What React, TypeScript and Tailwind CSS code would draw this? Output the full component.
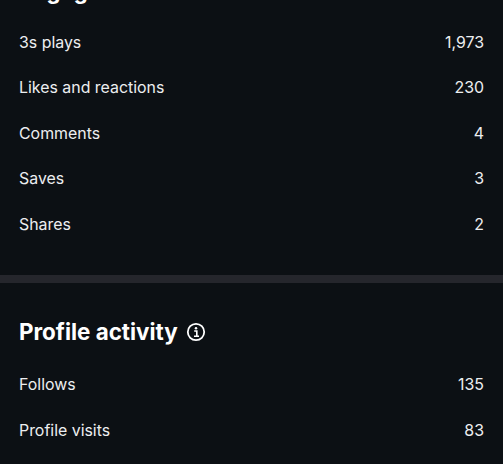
const engagement = [
  { label: '3s plays', value: '1,973' },
  { label: 'Likes and reactions', value: '230' },
  { label: 'Comments', value: '4' },
  { label: 'Saves', value: '3' },
  { label: 'Shares', value: '2' },
];

const profile = [
  { label: 'Follows', value: '135' },
  { label: 'Profile visits', value: '83' },
];

function InfoIcon() {
  return (
    <svg viewBox="0 0 20 20" className="h-[20px] w-[20px]" fill="none">
      <circle cx="10" cy="10" r="8.2" stroke="currentColor" strokeWidth="1.8" />
      <circle cx="10" cy="6.2" r="1.25" fill="currentColor" />
      <path d="M8.2 9h2.6v5M8 14.2h5" stroke="currentColor" strokeWidth="1.6" />
    </svg>
  );
}

function Row({ label, value }: { label: string; value: string }) {
  return (
    <div className="flex h-[45.5px] items-center justify-between text-[15.9px] font-normal text-[#eceef0]">
      <span>{label}</span>
      <span>{value}</span>
    </div>
  );
}

export default function App() {
  return (
    <div
      className="h-[464px] overflow-hidden bg-[#0c1014] text-white"
      style={{ fontFamily: "Inter, 'Liberation Sans', sans-serif" }}
    >
      <div className="-mt-[29px] px-[19px]">
        <h2 className="flex h-[39px] items-center text-[22.4px] font-bold">Engagement</h2>
        <div className="mt-[10px]">
          {engagement.map((row) => (
            <Row key={row.label} {...row} />
          ))}
        </div>
      </div>
      <div className="mt-[27px] h-[8px] bg-[#25262c]" />
      <div className="px-[19px] pt-[32px]">
        <h2 className="flex h-[34px] items-center gap-[8px] text-[22.4px] font-bold">
          Profile activity
          <InfoIcon />
        </h2>
        <div className="mt-[14px]">
          {profile.map((row) => (
            <Row key={row.label} {...row} />
          ))}
        </div>
      </div>
    </div>
  );
}
